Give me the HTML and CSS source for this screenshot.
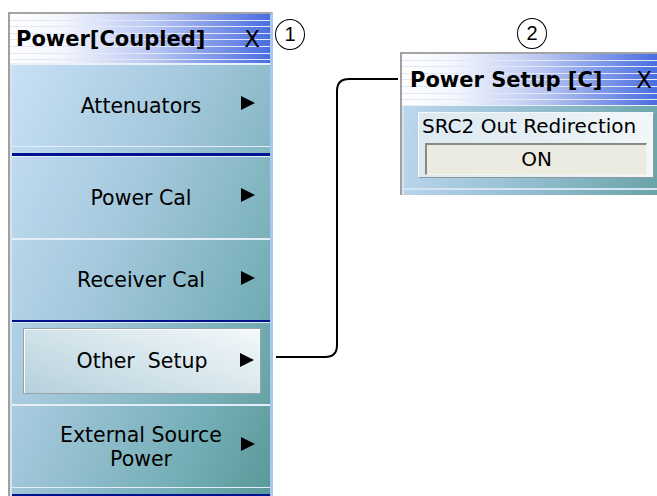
FILE: index.html
```html
<!DOCTYPE html>
<html lang="en">
<head>
    <meta charset="UTF-8">
    <meta name="viewport" content="width=device-width, initial-scale=1.0">
    <title>power menu</title>
    <link rel="stylesheet" href="styles.css">
</head>
<body>
    <div id="stage">
        <svg id="connector" width="657" height="496" viewBox="0 0 657 496">
            <path d="M276 357 H325 Q337 357 337 345 V91 Q337 79 349 79 H398" fill="none" stroke="#000" stroke-width="2"/>
        </svg>
        <span class="callout" id="callout-1">1</span>
        <span class="callout" id="callout-2">2</span>

        <div class="menu" id="power-menu">
            <div class="title-bar">
                <span>Power[Coupled]</span>
                <span class="close">X</span>
            </div>
            <div class="menu-body">
                <div class="item"><span class="label">Attenuators</span><span class="arrow"></span></div>
                <div class="sep sep-double"></div>
                <div class="item"><span class="label">Power Cal</span><span class="arrow"></span></div>
                <div class="sep sep-light"></div>
                <div class="item item-short"><span class="label">Receiver Cal</span><span class="arrow"></span></div>
                <div class="sep sep-navy"></div>
                <div class="item-wrap">
                    <div class="item item-active"><span class="label">Other&nbsp; Setup</span><span class="arrow"></span></div>
                </div>
                <div class="sep sep-light"></div>
                <div class="item"><span class="label">External Source<br>Power</span><span class="arrow"></span></div>
                <div class="sep sep-double"></div>
            </div>
        </div>

        <div class="menu" id="setup-menu">
            <div class="title-bar">
                <span>Power Setup [C]</span>
                <span class="close">X</span>
            </div>
            <div class="menu-body">
                <div class="group">
                    <div class="group-label">SRC2 Out Redirection</div>
                    <div class="toggle">ON</div>
                </div>
            </div>
        </div>
    </div>
</body>
</html>
```

FILE: styles.css
```css
body {
    margin: 0;
    background-color: white;
    font-family: "DejaVu Sans", Verdana, sans-serif;
    color: black;
}
#stage {
    position: relative;
    width: 657px;
    height: 496px;
    overflow: hidden;
}
#connector {
    position: absolute;
    left: 0;
    top: 0;
}
.callout {
    position: absolute;
    width: 28px;
    height: 29px;
    border: 1.5px solid black;
    border-radius: 50%;
    font-family: "Liberation Sans", Arial, sans-serif;
    font-size: 20px;
    line-height: 29px;
    text-align: center;
}
#callout-1 {
    left: 275px;
    top: 19px;
}
#callout-2 {
    left: 517px;
    top: 18px;
}

/* panels */
.menu {
    position: absolute;
    border-top: 2px solid #a4a4a4;
    border-left: 2px solid #a0a0a0;
}
#power-menu {
    left: 8px;
    top: 12px;
    width: 260px;
    border-right: 3px solid #a9c6ec;
}
#setup-menu {
    left: 400px;
    top: 52px;
    width: 255px;
    border-right: 2px solid #a9c6ec;
}
.title-bar {
    display: flex;
    justify-content: space-between;
    align-items: center;
    height: 49px;
    padding: 0 10px 0 6px;
    font-size: 21px;
    font-weight: bold;
    background:
        repeating-linear-gradient(to bottom, transparent 0, transparent 5.6px, #e2e8f8 5.6px, #e2e8f8 6.6px),
        linear-gradient(to right, #ffffff 0%, #f4f6fd 20%, #b8c6f2 55%, #4a6ee0 100%);
    border-bottom: 2px solid #eaf0f8;
}
#setup-menu .title-bar {
    height: 51px;
    padding: 0 5px 0 8px;
    border-bottom: 1px solid #eaf0f8;
}
.close {
    font-weight: normal;
    font-size: 23px;
}
.menu-body {
    border-left: 2px solid #d6e4f2;
    background: linear-gradient(115deg, #c8e0f6 0%, #a4c8dc 40%, #74aeb6 78%, #5a9898 100%);
}

/* menu items */
.item {
    display: grid;
    grid-template-columns: 1fr auto 1fr;
    align-items: center;
    height: 81px;
    font-size: 20.5px;
    line-height: 24px;
    text-align: center;
}
.item-short {
    height: 80px;
}
.item .label {
    grid-column: 2;
}
.arrow {
    grid-column: 3;
    justify-self: end;
    width: 0;
    height: 0;
    margin: 0 15px 5px 0;
    border-left: 14px solid black;
    border-top: 7px solid transparent;
    border-bottom: 7px solid transparent;
}
.item-wrap {
    height: 81px;
    padding: 5px 9px 10px 11px;
    box-sizing: border-box;
}
.item-active {
    height: 66px;
    box-sizing: border-box;
    border: 1px solid #97a3a6;
    box-shadow: inset 1px 1px 0 #ffffff;
    background: linear-gradient(200deg, #f4f8fa 0%, #d8e7ed 45%, #b6d0dc 100%);
}
.item-active .arrow {
    margin-right: 6px;
    margin-bottom: 3px;
}
.sep-double {
    height: 11px;
    box-sizing: border-box;
    border-top: 1px solid #e4eef8;
    border-bottom: 1px solid #e4eef8;
    background: linear-gradient(to bottom, transparent 0, transparent 6px, #00128f 6px, #00128f 9px);
}
.sep-light {
    height: 2px;
    background-color: #e4eef8;
}
.sep-navy {
    height: 3px;
    background: linear-gradient(to bottom, #00128f 0, #00128f 2px, #dce8f4 2px);
}

/* setup panel */
#setup-menu .menu-body {
    height: 89px;
    box-sizing: border-box;
    padding: 6px 3px 0 14px;
    background: linear-gradient(100deg, #bcd6ee 0%, #94bed0 50%, #6aa4a8 100%);
}
#setup-menu .menu-body::after {
    content: "";
    display: block;
    margin: 10px -3px 0 -14px;
    height: 2px;
    background-color: #d4e4f0;
}
.group {
    width: 236px;
    height: 66px;
    box-sizing: border-box;
    border: 1px solid #8c9aa0;
    border-top-color: #f4f8fa;
    border-left-color: #f4f8fa;
    background: linear-gradient(to right, #dce9f1 0%, #e6f0f5 60%, #f2f7f9 100%);
    padding: 0 6px 0 3px;
}
.group-label {
    font-size: 20px;
    line-height: 24px;
    padding-top: 1px;
}
.toggle {
    margin: 5px 0 0 3px;
    height: 32px;
    box-sizing: border-box;
    border-top: 2px solid #8a8a84;
    border-left: 2px solid #8a8a84;
    border-right: 1px solid #f4f4ec;
    border-bottom: 1px solid #f4f4ec;
    background-color: #ecebe1;
    font-size: 20px;
    line-height: 29px;
    text-align: center;
}
```
